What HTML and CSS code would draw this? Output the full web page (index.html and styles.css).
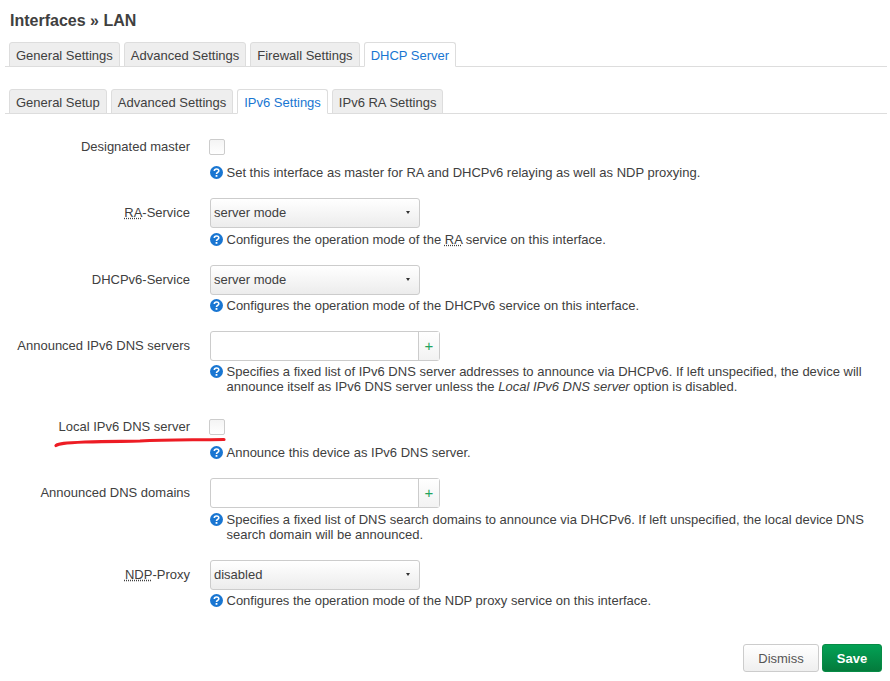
FILE: index.html
```html
<!DOCTYPE html>
<html lang="en">
<head>
    <meta charset="UTF-8">
    <title>Interfaces - LAN</title>
    <link rel="stylesheet" href="styles.css">
</head>
<body>
    <svg width="0" height="0" class="defs">
        <symbol id="help" viewBox="0 0 13 13">
            <circle cx="6.5" cy="6.5" r="6.5" fill="#1976d2"/>
            <path d="M4.3 5 C4.4 2.4 8.8 2.3 8.8 4.8 C8.8 6.4 6.5 6.4 6.5 8" fill="none" stroke="#fff" stroke-width="1.6"/>
            <rect x="5.6" y="9" width="1.8" height="1.8" fill="#fff"/>
        </symbol>
    </svg>

    <div class="main">
        <h2 class="title">Interfaces » LAN</h2>

        <ul class="tabs">
            <li>General Settings</li>
            <li>Advanced Settings</li>
            <li>Firewall Settings</li>
            <li class="active">DHCP Server</li>
        </ul>

        <ul class="tabs sub">
            <li>General Setup</li>
            <li>Advanced Settings</li>
            <li class="active">IPv6 Settings</li>
            <li>IPv6 RA Settings</li>
        </ul>

        <div class="section">
            <div class="row">
                <label class="row-title">Designated master</label>
                <div class="field">
                    <div class="control"><span class="checkbox"></span></div>
                    <div class="help">
                        <svg class="help-icon"><use href="#help"/></svg>
                        <span>Set this interface as master for RA and DHCPv6 relaying as well as NDP proxying.</span>
                    </div>
                </div>
            </div>

            <div class="row">
                <label class="row-title"><abbr>RA</abbr>-Service</label>
                <div class="field">
                    <div class="control">
                        <div class="dropdown"><span>server mode</span><i class="caret"></i></div>
                    </div>
                    <div class="help lower">
                        <svg class="help-icon"><use href="#help"/></svg>
                        <span>Configures the operation mode of the <abbr>RA</abbr> service on this interface.</span>
                    </div>
                </div>
            </div>

            <div class="row">
                <label class="row-title">DHCPv6-Service</label>
                <div class="field">
                    <div class="control">
                        <div class="dropdown"><span>server mode</span><i class="caret"></i></div>
                    </div>
                    <div class="help">
                        <svg class="help-icon"><use href="#help"/></svg>
                        <span>Configures the operation mode of the DHCPv6 service on this interface.</span>
                    </div>
                </div>
            </div>

            <div class="row">
                <label class="row-title">Announced IPv6 DNS servers</label>
                <div class="field">
                    <div class="control">
                        <div class="dynlist"><span class="dynlist-input"></span><span class="dynlist-add">+</span></div>
                    </div>
                    <div class="help">
                        <svg class="help-icon"><use href="#help"/></svg>
                        <span>Specifies a fixed list of IPv6 DNS server addresses to announce via DHCPv6. If left unspecified, the device will announce itself as IPv6 DNS server unless the <em>Local IPv6 DNS server</em> option is disabled.</span>
                    </div>
                </div>
            </div>

            <div class="row">
                <label class="row-title">Local IPv6 DNS server</label>
                <div class="field">
                    <div class="control"><span class="checkbox"></span></div>
                    <div class="help">
                        <svg class="help-icon"><use href="#help"/></svg>
                        <span>Announce this device as IPv6 DNS server.</span>
                    </div>
                </div>
            </div>

            <div class="row">
                <label class="row-title">Announced DNS domains</label>
                <div class="field">
                    <div class="control">
                        <div class="dynlist"><span class="dynlist-input"></span><span class="dynlist-add">+</span></div>
                    </div>
                    <div class="help lower">
                        <svg class="help-icon"><use href="#help"/></svg>
                        <span>Specifies a fixed list of DNS search domains to announce via DHCPv6. If left unspecified, the local device DNS search domain will be announced.</span>
                    </div>
                </div>
            </div>

            <div class="row">
                <label class="row-title"><abbr>NDP</abbr>-Proxy</label>
                <div class="field">
                    <div class="control">
                        <div class="dropdown"><span>disabled</span><i class="caret"></i></div>
                    </div>
                    <div class="help">
                        <svg class="help-icon"><use href="#help"/></svg>
                        <span>Configures the operation mode of the NDP proxy service on this interface.</span>
                    </div>
                </div>
            </div>
        </div>

        <div class="actions">
            <button class="btn">Dismiss</button>
            <button class="btn save">Save</button>
        </div>
    </div>

    <!-- hand drawn red mark over the screenshot -->
    <svg class="scribble" width="180" height="14" viewBox="0 0 180 14">
        <path d="M6 10.5 C9 8.5 14 8 35 7 C60 6 75 6.5 90 6 C115 4.5 135 5 174 4.5" fill="none" stroke="#ed1c24" stroke-width="3.2" stroke-linecap="round"/>
    </svg>
</body>
</html>
```

FILE: styles.css
```css
* {
    box-sizing: border-box;
}
html, body {
    height: 100%;
}
body {
    margin: 0;
    background: #fff;
    color: #404040;
    font-family: "Liberation Sans", Arial, sans-serif;
    font-size: 13px;
    position: relative;
    overflow: hidden;
}
.defs {
    position: absolute;
}
.main {
    padding: 10px 3px 0 5px;
}
.title {
    margin: 0 0 12px 5px;
    font-size: 16px;
    line-height: 21px;
    height: 20px;
    font-weight: bold;
}
.tabs {
    display: flex;
    gap: 4px;
    list-style: none;
    margin: 0 0 22px;
    padding: 0 0 0 4px;
    height: 25px;
    border-bottom: 1px solid #ddd;
}
.tabs.sub {
    margin-bottom: 18px;
}
.tabs li {
    height: 25px;
    padding: 0 6px;
    line-height: 26px;
    color: #404040;
    background: #eee;
    border: 1px solid #ddd;
    border-radius: 3px 3px 0 0;
}
.tabs li.active {
    color: #1976d2;
    background: #fff;
    border-bottom-color: #fff;
}
.row {
    display: flex;
    gap: 20px;
    margin-bottom: 18px;
}
.row-title {
    width: 185px;
    flex: none;
    text-align: right;
    line-height: 30px;
}
.field {
    flex: 1;
}
.control {
    height: 30px;
    display: flex;
    align-items: center;
}
abbr {
    text-decoration: underline dotted #404040;
}
.checkbox {
    width: 16px;
    height: 16px;
    margin-left: -1px;
    border: 1px solid #ccc;
    border-radius: 2px;
    background: linear-gradient(#f4f4f4, #fff);
}
.dropdown {
    width: 210px;
    height: 30px;
    display: flex;
    align-items: center;
    justify-content: space-between;
    padding: 0 9px 2px 3px;
    border: 1px solid #ccc;
    border-radius: 3px;
    background: linear-gradient(#fff, #ececec);
}
.caret {
    width: 0;
    height: 0;
    border-left: 2.5px solid transparent;
    border-right: 2.5px solid transparent;
    border-top: 3px solid #333;
}
.dynlist {
    width: 230px;
    height: 30px;
    display: flex;
    border: 1px solid #ccc;
    border-radius: 3px;
}
.dynlist-input {
    flex: 1;
}
.dynlist-add {
    width: 21px;
    text-align: center;
    line-height: 28px;
    font-size: 15px;
    color: #22a45d;
    border-left: 1px solid #ccc;
    background: linear-gradient(#fff, #f2f2f2);
}
.help {
    display: flex;
    gap: 3.5px;
    margin-top: 3px;
    line-height: 15px;
    width: 655px;
}
.help.lower {
    margin-top: 4px;
}
.help-icon {
    flex: none;
    width: 13px;
    height: 13px;
    margin-top: 0.5px;
}
.actions {
    display: flex;
    justify-content: flex-end;
    gap: 3px;
    margin-top: 36px;
    padding-right: 5px;
}
.btn {
    height: 28px;
    width: 76px;
    font: inherit;
    color: #555;
    border: 1px solid #ccc;
    border-radius: 3px;
    background: linear-gradient(#fff, #efefef);
}
.btn.save {
    width: 60px;
    font-weight: bold;
    color: #fff;
    border-color: #078b45;
    background: linear-gradient(#03a155, #047b3c);
}
.scribble {
    position: absolute;
    left: 50px;
    top: 435px;
}
```
